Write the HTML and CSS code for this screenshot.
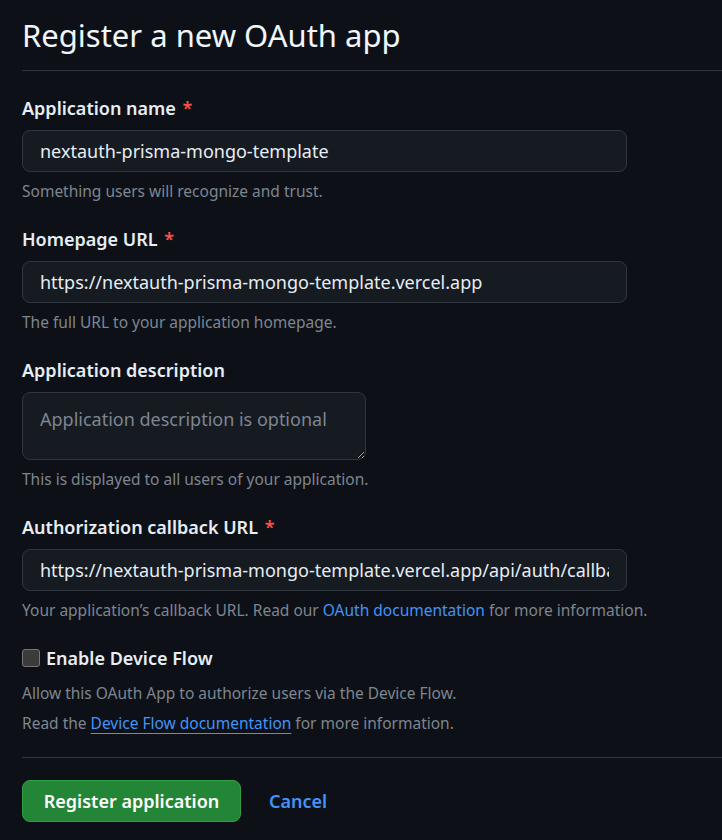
FILE: index.html
```html
<!DOCTYPE html>
<html lang="en">
<head>
<meta charset="utf-8">
<title>Register a new OAuth app</title>
<link rel="stylesheet" href="styles.css">
</head>
<body>
<div class="page">
  <div class="subhead">
    <h2 class="subhead-title">Register a new OAuth app</h2>
  </div>
  <form class="form">
    <div class="group">
      <label class="label">Application name <span class="req">*</span></label>
      <input class="input" type="text" value="nextauth-prisma-mongo-template">
      <p class="note">Something users will recognize and trust.</p>
    </div>
    <div class="group">
      <label class="label">Homepage URL <span class="req">*</span></label>
      <input class="input" type="text" value="https://nextauth-prisma-mongo-template.vercel.app">
      <p class="note">The full URL to your application homepage.</p>
    </div>
    <div class="group">
      <label class="label">Application description</label>
      <textarea class="textarea" placeholder="Application description is optional"></textarea>
      <p class="note">This is displayed to all users of your application.</p>
    </div>
    <div class="group">
      <label class="label">Authorization callback URL <span class="req">*</span></label>
      <input class="input" type="text" value="https://nextauth-prisma-mongo-template.vercel.app/api/auth/callback/github">
      <p class="note">Your application’s callback URL. Read our <a class="link" href="#">OAuth documentation</a> for more information.</p>
    </div>
    <div class="check-group">
      <label class="check-label"><span class="checkbox"></span>Enable Device Flow</label>
      <p class="note note-line first-line">Allow this OAuth App to authorize users via the Device Flow.</p>
      <p class="note note-line">Read the <a class="link link-under" href="#">Device Flow documentation</a> for more information.</p>
    </div>
    <div class="actions">
      <button class="btn-primary" type="button">Register application</button>
      <a class="btn-link" href="#">Cancel</a>
    </div>
  </form>
</div>
</body>
</html>
```

FILE: styles.css
```css
html, body {
  margin: 0;
  padding: 0;
  background: #0d1117;
}
body {
  font-family: "Noto Sans", "Open Sans", sans-serif;
  color: #e6edf3;
  overflow: hidden;
}
.page {
  padding-left: 22px;
}
.subhead {
  border-bottom: 1px solid #30363d;
  padding-top: 15px;
  padding-bottom: 15px;
}
.subhead-title {
  margin: 0;
  font-size: 31px;
  font-weight: 400;
  line-height: 40px;
  color: #f0f6fc;
}
.form {
  margin: 0;
  padding-top: 25px;
}
.group {
  margin-bottom: 26px;
}
.label {
  display: block;
  font-size: 18px;
  font-weight: 600;
  line-height: 24px;
  margin-bottom: 10px;
  color: #e6edf3;
}
.req {
  color: #f85149;
  margin-left: 2px;
}
.input, .textarea {
  display: block;
  box-sizing: border-box;
  height: 42px;
  width: 605px;
  padding: 0 17px;
  font-family: inherit;
  font-size: 18px;
  color: #e6edf3;
  background: #161b22;
  border: 1px solid #30363d;
  border-radius: 8px;
  outline: none;
}
.textarea {
  width: 344px;
  height: 68px;
  padding: 14px 17px 10px;
  line-height: 24px;
  resize: vertical;
}
.textarea::placeholder {
  color: #7d8590;
}
.note {
  margin: 9px 0 0;
  font-size: 15.5px;
  line-height: 21px;
  color: #7d8590;
}
.group .note {
  margin-bottom: -1px;
}
.link {
  color: #4493f8;
  text-decoration: none;
}
.link-under {
  text-decoration: underline;
  text-underline-offset: 4px;
}
.check-group {
  margin-top: -1px;
}
.check-label {
  display: flex;
  align-items: center;
  gap: 6px;
  font-size: 18px;
  font-weight: 600;
  line-height: 24px;
  color: #e6edf3;
}
.checkbox {
  box-sizing: border-box;
  width: 18px;
  height: 18px;
  background: #3b3b3b;
  border: 1px solid #767676;
  border-radius: 3px;
}
.note-line {
  margin: 0;
  line-height: 30px;
}
.first-line {
  margin-top: 8px;
}
.actions {
  margin-top: 19px;
  border-top: 1px solid #30363d;
  padding-top: 22px;
  display: flex;
  align-items: center;
  gap: 28px;
}
.btn-primary {
  box-sizing: border-box;
  height: 42px;
  width: 219px;
  font-family: inherit;
  font-size: 18px;
  font-weight: 600;
  color: #ffffff;
  background: #238636;
  border: 1px solid #2ea043;
  border-radius: 8px;
  cursor: pointer;
}
.btn-link {
  font-size: 18px;
  font-weight: 600;
  color: #4493f8;
  text-decoration: none;
}
```
